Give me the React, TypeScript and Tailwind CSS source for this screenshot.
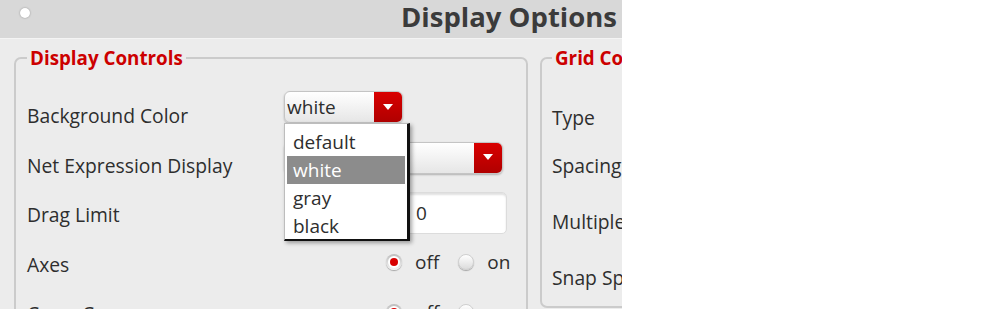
import React from "react";

function Caret() {
  return (
    <svg width="10" height="7" viewBox="0 0 10 7">
      <path d="M0 0 L10 0 L5 6 Z" fill="#ffffff" />
    </svg>
  );
}

function Select({ width, value }: { width: number; value: string }) {
  return (
    <div
      className="h-[32px] flex rounded-[6px] border border-[#c4c4c4] bg-gradient-to-b from-[#ffffff] to-[#e6e6e6] shadow-[0_1px_2px_rgba(0,0,0,0.25)] overflow-hidden"
      style={{ width }}
    >
      <div className="flex-1 flex items-center pl-[2px] text-[19px] text-[#2e2e2e] leading-none">{value}</div>
      <div className="w-[28px] flex items-center justify-center bg-gradient-to-b from-[#d90000] to-[#b00000]">
        <Caret />
      </div>
    </div>
  );
}

function Radio({ on }: { on: boolean }) {
  return on ? (
    <span className="w-[16px] h-[16px] rounded-full bg-gradient-to-b from-[#bdbdbd] to-[#f5f5f5] shadow-[0_1px_1px_rgba(0,0,0,0.3)] flex items-center justify-center">
      <span className="w-[12px] h-[12px] rounded-full bg-white flex items-center justify-center">
        <span className="w-[8px] h-[8px] rounded-full bg-[#d80000]" />
      </span>
    </span>
  ) : (
    <span className="w-[16px] h-[16px] rounded-full bg-gradient-to-b from-[#ffffff] to-[#dcdcdc] border border-[#cfcfcf] shadow-[0_1px_1px_rgba(0,0,0,0.3)]" />
  );
}

function RadioPair() {
  return (
    <div className="flex items-center ml-[102px] mt-[-2px] text-[19px] text-[#2e2e2e]">
      <Radio on />
      <span className="ml-[13px]">off</span>
      <span className="ml-[19px] flex"><Radio on={false} /></span>
      <span className="ml-[13px]">on</span>
    </div>
  );
}

function Label({ children }: { children: React.ReactNode }) {
  return <div className="flex items-center pt-[4px] text-[19.3px] text-[#2e2e2e] whitespace-nowrap">{children}</div>;
}

export default function App() {
  return (
    <div className="w-[1000px] h-[315px] bg-white overflow-hidden font-['Open_Sans',sans-serif]">
      <div className="w-[622px] h-[309px] bg-[#ececec] overflow-hidden flex flex-col">
        <div className="h-[39px] shrink-0 bg-[#d8d8d8] border-b border-[#f4f4f4] flex items-start justify-between pl-[20px] pr-[5px]">
          <span className="mt-[8px] w-[10px] h-[10px] rounded-full bg-white shadow-[0_0_2px_rgba(0,0,0,0.35)]" />
          <span className="text-[27.5px] leading-[33px] font-bold text-[#3b3b3b]">Display Options</span>
        </div>
        <div className="flex items-start gap-[12px] pl-[14px] pt-[9px]">
          <fieldset className="w-[514px] h-[300px] shrink-0 border-2 border-[#cbcbcb] rounded-[7px] pl-[11px] pt-[22px]">
            <legend className="px-[3px] text-[18.8px] leading-[20px] font-bold text-[#cc0000] whitespace-nowrap">Display Controls</legend>
            <div className="grid grid-cols-[257px_1fr] auto-rows-[49.5px]">
              <Label>Background Color</Label>
              <div className="relative pt-[1px]">
                <Select width={119} value="white" />
                <div className="absolute left-0 top-[33px] w-[126px] h-[118px] bg-white border-l border-t border-[#bdbdbd] border-r-[3px] border-b-[2px] border-r-[#111] border-b-[#111] shadow-[2px_2px_4px_rgba(0,0,0,0.35)] pt-[4px] px-[2px] text-[19px] text-[#2e2e2e]">
                  <div className="h-[28px] flex items-center pl-[6px]">default</div>
                  <div className="h-[28px] flex items-center pl-[6px] bg-[#8c8c8c] text-white">white</div>
                  <div className="h-[28px] flex items-center pl-[6px]">gray</div>
                  <div className="h-[28px] flex items-center pl-[6px]">black</div>
                </div>
              </div>
              <Label>Net Expression Display</Label>
              <div className="pt-[2px]">
                <Select width={219} value="default" />
              </div>
              <Label>Drag Limit</Label>
              <div className="pt-[3px] pl-[113px]">
                <div className="w-[110px] h-[42px] bg-white rounded-[5px] border border-[#dcdcdc] shadow-[inset_0_2px_2px_rgba(0,0,0,0.12)] flex items-center pl-[18px] text-[19px] text-[#2e2e2e]">0</div>
              </div>
              <Label>Axes</Label>
              <div className="flex items-center"><RadioPair /></div>
              <Label>Cross Cursor</Label>
              <div className="flex items-center"><RadioPair /></div>
            </div>
          </fieldset>
          <fieldset className="w-[300px] h-[260px] shrink-0 border-2 border-[#cbcbcb] rounded-[7px] pl-[10px] pt-[25px]">
            <legend className="px-[3px] text-[18.8px] leading-[20px] font-bold text-[#cc0000] whitespace-nowrap">Grid Controls</legend>
            <div className="flex flex-col">
              <div className="h-[47px] flex"><Label>Type</Label></div>
              <div className="h-[48px] flex"><Label>Spacing</Label></div>
              <div className="h-[65px] flex"><Label>Multiple</Label></div>
              <div className="h-[47px] flex"><Label>Snap Spacing</Label></div>
            </div>
          </fieldset>
        </div>
      </div>
    </div>
  );
}
